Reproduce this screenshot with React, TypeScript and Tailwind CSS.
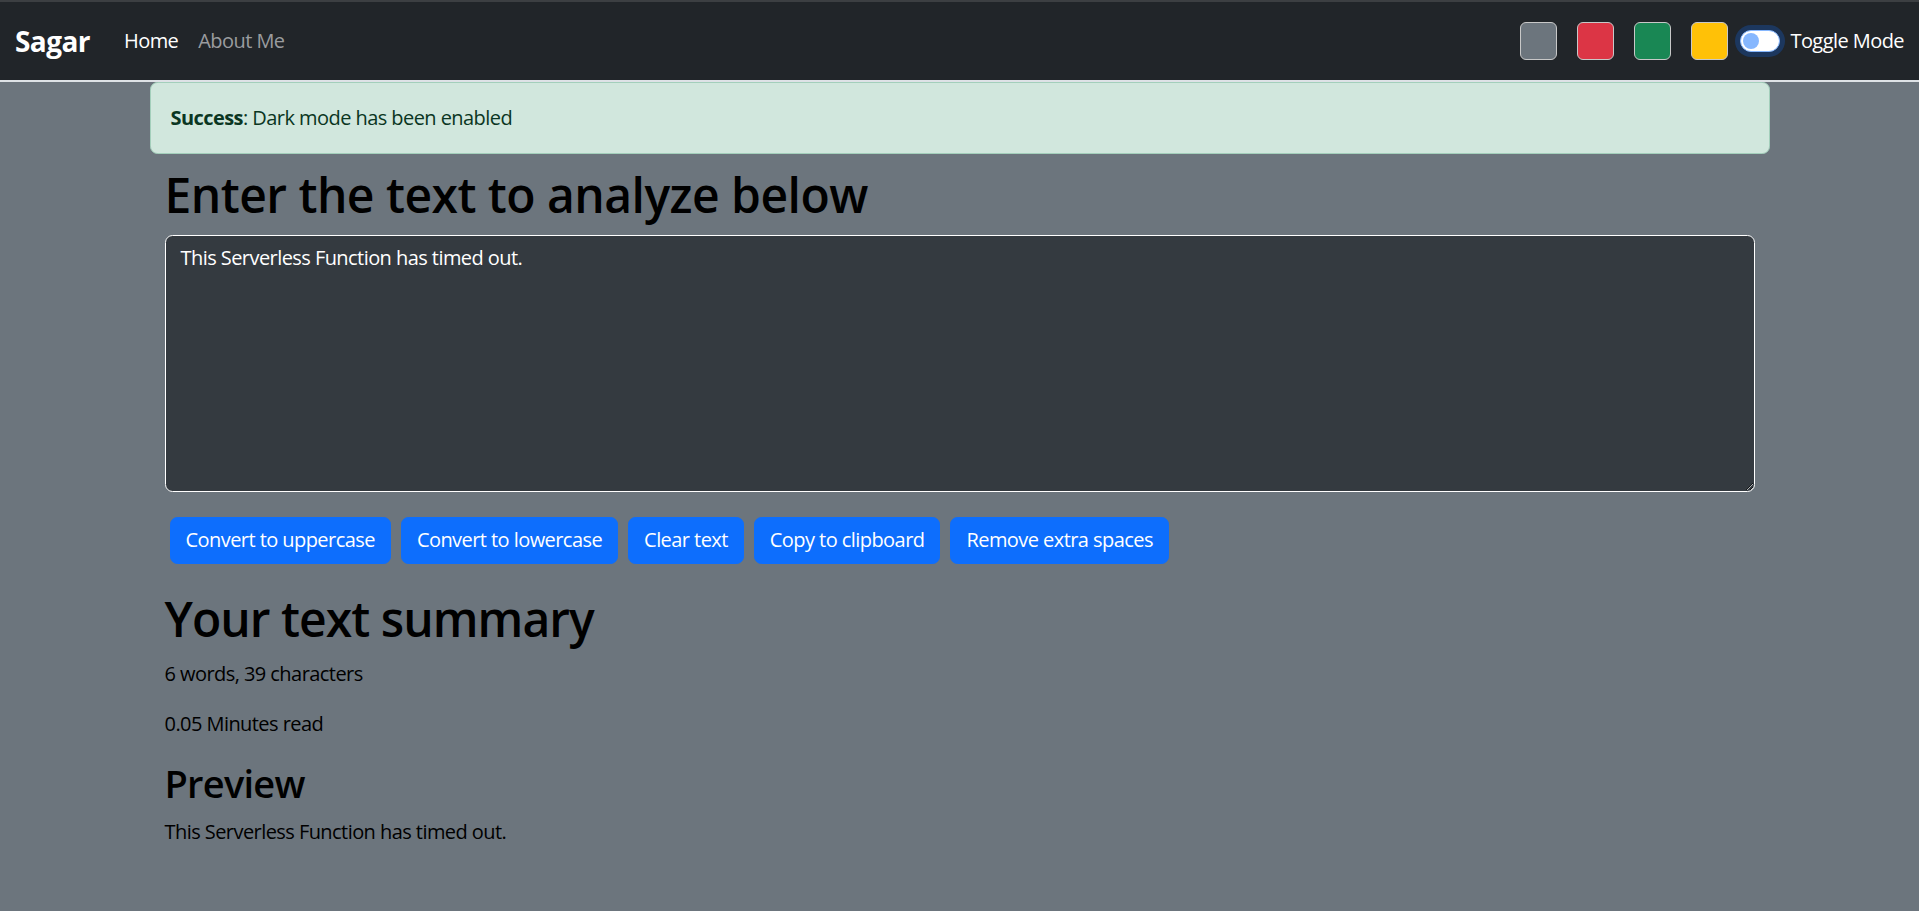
import { useState } from "react"

function App() {
  const [text, setText] = useState("This Serverless Function has timed out.")

  const words = text.split(/\s+/).filter((w) => w.length !== 0).length

  const swatches = [
    "bg-[#6c757d]",
    "bg-[#dc3545]",
    "bg-[#198754]",
    "bg-[#ffc107]",
  ]

  const actions = [
    "Convert to uppercase",
    "Convert to lowercase",
    "Clear text",
    "Copy to clipboard",
    "Remove extra spaces",
  ]

  return (
    <div
      className="min-h-screen bg-[#6c757d] text-[20px] leading-[30px] tracking-[-0.028em] text-black"
      style={{ fontFamily: '"Open Sans", "Noto Sans", sans-serif' }}
    >
      <div className="h-[2px] bg-[#3c3f42]" />

      {/* Navbar */}
      <nav className="h-[80px] bg-[#212529] border-b-2 border-[#dee2e6] flex items-center px-[15px]">
        <span className="text-[28px] font-bold text-white mr-[24px] tracking-[-0.02em]">
          Sagar
        </span>

        <a className="px-[10px] text-white">Home</a>
        <a className="px-[10px] text-[#9a9c9f]">About Me</a>

        <div className="ml-auto flex items-center">
          <div className="flex items-center gap-[20px]">
            {swatches.map((c) => (
              <div
                key={c}
                className={`w-[37px] h-[38px] rounded-[6px] border border-[#c8c8c8] ${c}`}
              />
            ))}
          </div>

          <div className="ml-[12px] w-[40px] h-[22px] rounded-full bg-white border border-[#86b7fe] ring-[5px] ring-[#1c375e] flex items-center px-[2px]">
            <div className="w-[16px] h-[16px] rounded-full bg-[#86b7fe]" />
          </div>

          <span className="ml-[10px] text-white">Toggle Mode</span>
        </div>
      </nav>

      <div className="w-[1650px] mx-auto px-[15px]">

        {/* Alert */}
        <div className="h-[62.5px]">
          <div className="bg-[#d1e7dd] border border-[#a3cfbb] text-[#0a3622] rounded-[7.5px] p-[20px]">
            <strong className="font-bold">Success</strong>: Dark mode has been enabled
          </div>
        </div>

        <div className="px-[15px] pt-[20px]">
          <h1 className="text-[48px] leading-[60px] font-semibold tracking-[-0.011em] mb-[10px]">
            Enter the text to analyze below
          </h1>

          <textarea
            value={text}
            onChange={(e) => setText(e.target.value)}
            rows={8}
            className="block w-full h-[257px] bg-[#343a40] text-white border border-white rounded-[7.5px] px-[15px] py-[7.5px] mb-[20px] outline-none"
          />

          <div className="flex flex-wrap">
            {actions.map((a) => (
              <button
                key={a}
                className="bg-[#0d6efd] border border-[#0d6efd] text-white rounded-[7.5px] px-[15px] py-[7.5px] m-[5px]"
              >
                {a}
              </button>
            ))}
          </div>

          {/* Summary */}
          <div className="mt-[20px]">
            <h1 className="text-[48px] leading-[60px] font-semibold tracking-[-0.02em] mb-[10px]">
              Your text summary
            </h1>

            <p className="mb-[20px]">
              {words} words, {text.length} characters
            </p>

            <p className="mb-[20px]">
              {(0.008 * words).toFixed(2).replace(/0$/, "5").slice(0, 4)} Minutes read
            </p>

            <h2 className="text-[38px] leading-[48px] font-semibold tracking-[-0.02em] mb-[10px]">
              Preview
            </h2>

            <p>{text}</p>
          </div>
        </div>
      </div>
    </div>
  )
}

export default App
